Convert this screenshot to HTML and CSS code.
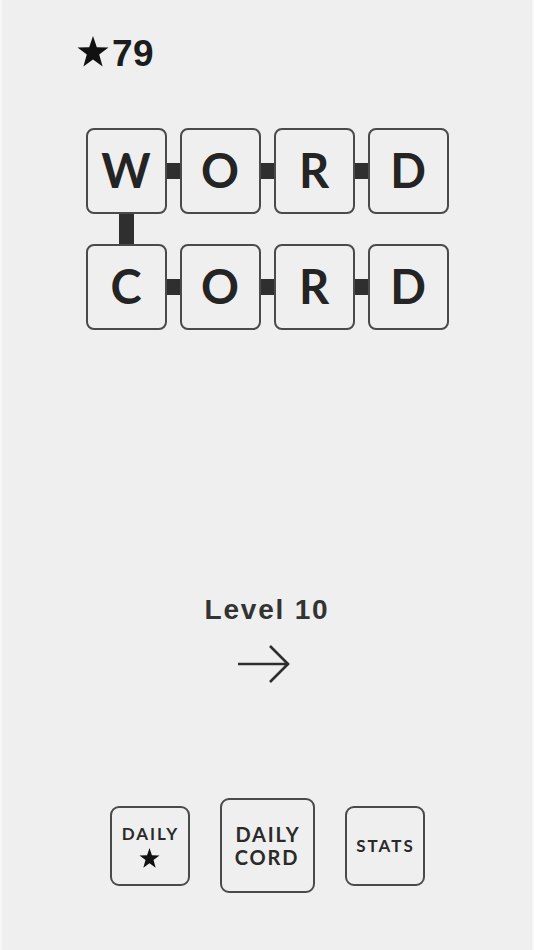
FILE: index.html
```html
<!DOCTYPE html>
<html>
<head>
<meta charset="utf-8">
<link rel="stylesheet" href="styles.css">
</head>
<body>
<div class="app">
  <div class="score">
    <svg class="score-star" width="32" height="31" viewBox="0 0 32 31"><polygon points="16,0 19.8,11.3 31.5,11.5 22.2,18.6 25.6,30.5 16,23.6 6.4,30.5 9.8,18.6 0.5,11.5 12.2,11.3" fill="#111"/></svg>
    <span class="score-num">79</span>
  </div>

  <div class="board">
    <div class="row">
      <div class="tile">W</div><div class="link"></div>
      <div class="tile">O</div><div class="link"></div>
      <div class="tile">R</div><div class="link"></div>
      <div class="tile">D</div>
    </div>
    <div class="vrow"><div class="vlink"></div></div>
    <div class="row">
      <div class="tile">C</div><div class="link"></div>
      <div class="tile">O</div><div class="link"></div>
      <div class="tile">R</div><div class="link"></div>
      <div class="tile">D</div>
    </div>
  </div>

  <div class="level">
    <div class="level-title">Level 10</div>
    <svg class="arrow" width="56" height="40" viewBox="0 0 56 40"><path d="M2 20 H53 M34 2 L52 20 L34 38" fill="none" stroke="#2e2e2e" stroke-width="2.6"/></svg>
  </div>

  <div class="buttons">
    <div class="btn btn-small">
      <span class="btn-text">DAILY</span>
      <svg class="btn-star" width="21" height="20" viewBox="0 0 32 31"><polygon points="16,0 19.8,11.3 31.5,11.5 22.2,18.6 25.6,30.5 16,23.6 6.4,30.5 9.8,18.6 0.5,11.5 12.2,11.3" fill="#111"/></svg>
    </div>
    <div class="btn btn-big">
      <span class="btn-text big">DAILY<br>CORD</span>
    </div>
    <div class="btn btn-small">
      <span class="btn-text">STATS</span>
    </div>
  </div>
</div>
</body>
</html>
```

FILE: styles.css
```css
html, body {
  margin: 0;
  padding: 0;
}
body {
  background: #f7f7f7;
}
.app {
  margin: 0 2px;
  width: 530px;
  height: 950px;
  background: #efefef;
  display: flex;
  flex-direction: column;
  align-items: center;
}
.score {
  align-self: flex-start;
  margin-top: 34px;
  margin-left: 75px;
  display: flex;
  align-items: flex-start;
  height: 40px;
}
.score-star {
  margin-top: 2px;
  margin-right: 3px;
}
.score-num {
  font-family: "Liberation Sans", Arial, sans-serif;
  font-weight: bold;
  font-size: 37px;
  line-height: 40px;
  letter-spacing: 0.5px;
  color: #1c1c1c;
}
.board {
  margin-top: 54px;
  display: flex;
  flex-direction: column;
  width: 363px;
}
.row {
  display: flex;
  align-items: center;
}
.tile {
  box-sizing: border-box;
  width: 81px;
  height: 86px;
  padding-bottom: 2px;
  border: 2px solid #4a4a4a;
  border-radius: 8px;
  display: flex;
  align-items: center;
  justify-content: center;
  font-family: "Lato", sans-serif;
  font-weight: 700;
  font-size: 47px;
  color: #242424;
}
.link {
  width: 13px;
  height: 16px;
  background: #2f2f2f;
}
.vrow {
  height: 30px;
  display: flex;
}
.vlink {
  margin-left: 33px;
  width: 15px;
  background: #2f2f2f;
}
.level {
  margin-top: 264px;
  display: flex;
  flex-direction: column;
  align-items: center;
}
.level-title {
  font-family: "Liberation Sans", Arial, sans-serif;
  font-weight: bold;
  font-size: 28px;
  line-height: 32px;
  letter-spacing: 1.8px;
  color: #333;
}
.arrow {
  margin-top: 18px;
  margin-left: -6px;
}
.buttons {
  margin-top: 114px;
  display: flex;
  align-items: center;
  gap: 30px;
}
.btn {
  box-sizing: border-box;
  border: 2px solid #4a4a4a;
  border-radius: 9px;
  display: flex;
  flex-direction: column;
  align-items: center;
  justify-content: center;
}
.btn-small {
  width: 80px;
  height: 80px;
}
.btn-big {
  width: 95px;
  height: 95px;
}
.btn-text {
  font-family: "Lato", sans-serif;
  font-weight: 700;
  font-size: 17px;
  line-height: 20px;
  letter-spacing: 2px;
  text-indent: 2px;
  color: #2a2a2a;
  text-align: center;
}
.btn-text.big {
  font-size: 20px;
  line-height: 23px;
  letter-spacing: 1.8px;
}
.btn-star {
  margin-top: 4px;
}
```
